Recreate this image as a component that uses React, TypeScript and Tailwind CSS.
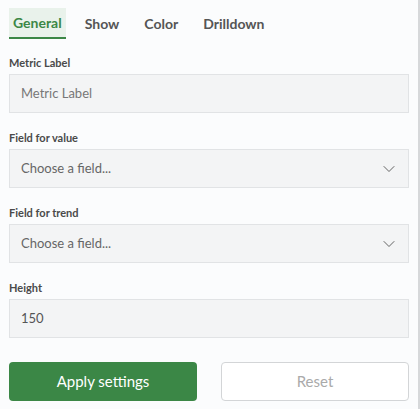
import { ChevronDown } from 'lucide-react';

const tabs = ['General', 'Show', 'Color', 'Drilldown'];

function Label({ children }: { children: string }) {
  return <div className="h-[17px] text-[11px] font-bold text-[#4a4a4a] leading-[15px] mb-[2px]">{children}</div>;
}

function Input({ value, placeholder }: { value?: string; placeholder?: string }) {
  return (
    <div className="h-[39px] bg-[#f3f4f5] border border-[#e1e3e5] px-[11px] flex items-center text-[13px]">
      {value ? <span className="text-[#555]">{value}</span> : <span className="text-[#777]">{placeholder}</span>}
    </div>
  );
}

function Select({ placeholder }: { placeholder: string }) {
  return (
    <div className="h-[39px] bg-[#f3f4f5] border border-[#e1e3e5] pl-[11px] pr-[9px] flex items-center justify-between text-[13px] text-[#666]">
      <span>{placeholder}</span>
      <ChevronDown className="w-[20px] h-[20px] text-[#555]" strokeWidth={1.1} />
    </div>
  );
}

export default function App() {
  return (
    <div className="w-[420px] h-[409px] bg-[#fbfcfd] border-r-2 border-[#d6d8da] font-['Lato',sans-serif] box-border">
      <div className="px-[9px]">
        {/* Tabs */}
        <div className="flex gap-[13px] pt-[8px]">
          {tabs.map((t, i) => (
            <div
              key={t}
              className={
                i === 0
                  ? 'h-[31px] px-[4px] flex items-center text-[14px] font-bold text-[#3b8746] bg-[#e9f2eb] border-b-2 border-[#3b8746]'
                  : 'h-[31px] px-[6px] flex items-center text-[14px] font-bold text-[#555]'
              }
            >
              {t}
            </div>
          ))}
        </div>

        <div className="mt-[16px] flex flex-col gap-[17px] w-[400px]">
          <div>
            <Label>Metric Label</Label>
            <Input placeholder="Metric Label" />
          </div>
          <div>
            <Label>Field for value</Label>
            <Select placeholder="Choose a field..." />
          </div>
          <div>
            <Label>Field for trend</Label>
            <Select placeholder="Choose a field..." />
          </div>
          <div>
            <Label>Height</Label>
            <Input value="150" />
          </div>
        </div>

        <div className="mt-[24px] flex justify-between w-[400px]">
          <button className="w-[188px] h-[39px] rounded-[4px] bg-[#3b8746] text-white text-[15px]">Apply settings</button>
          <button className="w-[188px] h-[39px] rounded-[4px] bg-white border border-[#d3d5d7] text-[#aaa] text-[15px]">Reset</button>
        </div>
      </div>
    </div>
  );
}
